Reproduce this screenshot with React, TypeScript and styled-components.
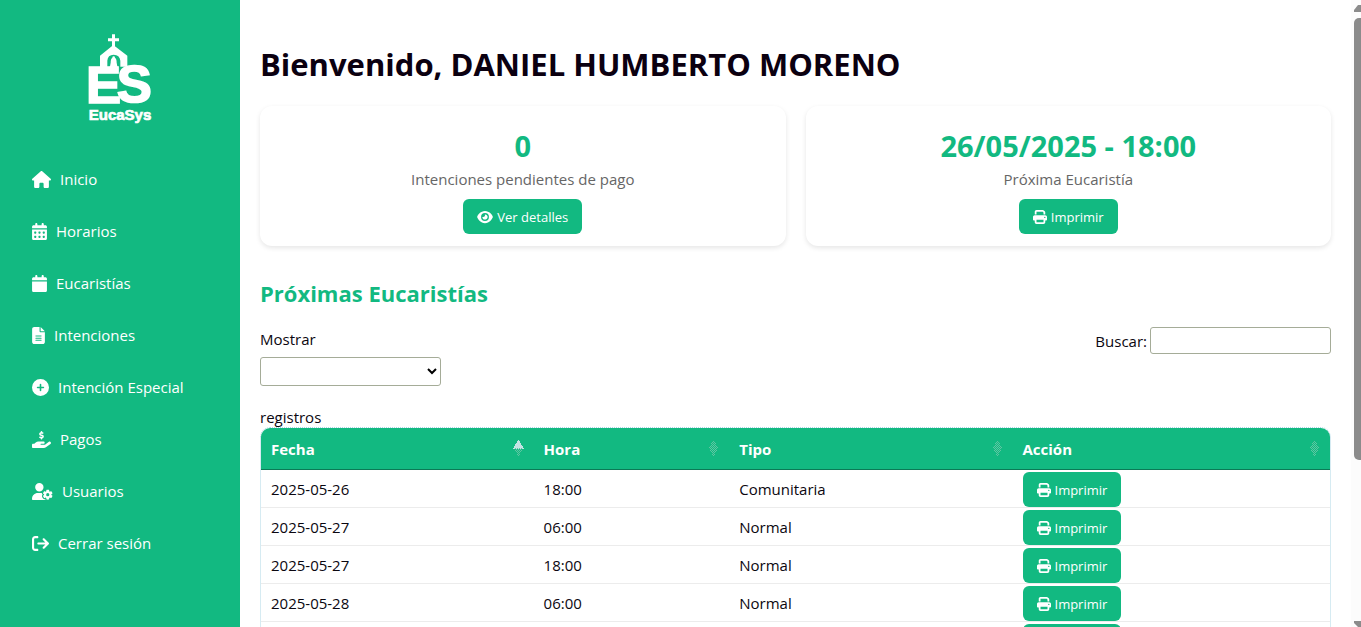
import React from "react";
import styled, { createGlobalStyle, css } from "styled-components";
import {
  FaHouse,
  FaCalendarDays,
  FaCalendar,
  FaFileLines,
  FaCirclePlus,
  FaHandHoldingDollar,
  FaUserGear,
  FaArrowRightFromBracket,
  FaEye,
  FaPrint,
} from "react-icons/fa6";

const green = "#12b981";

const GlobalStyle = createGlobalStyle`
  *, *::before, *::after { box-sizing: border-box; }
  body {
    margin: 0;
    background: #fff;
    color: #0b0710;
    font-family: "Segoe UI", "Open Sans", "Noto Sans", sans-serif;
    font-size: 15px;
    line-height: 24px;
  }
`;

const Shell = styled.div`
  display: flex;
  height: 100vh;
  overflow: hidden;
`;

const Sidebar = styled.aside`
  flex: 0 0 240px;
  background: ${green};
  color: #fff;
  padding: 34px 20px;
`;

const Logo = styled.svg`
  display: block;
  width: 64px;
  height: 92px;
  margin: 0 auto 33px;
  overflow: visible;
`;

const Menu = styled.nav`
  display: flex;
  flex-direction: column;
  gap: 12px;
`;

const MenuLink = styled.a<{ $iconWidth: number }>`
  display: flex;
  align-items: center;
  gap: 9px;
  height: 40px;
  padding: 0 12px;
  color: #fff;
  text-decoration: none;

  svg {
    width: ${(p) => p.$iconWidth}px;
    height: 17px;
  }
`;

const Main = styled.main`
  flex: 1;
  min-width: 0;
  padding: 40px 20px 0;
`;

const Title = styled.h1`
  margin: 0 0 18px;
  font-size: 31px;
  line-height: 48px;
  color: #0b0010;
`;

const Cards = styled.section`
  display: grid;
  grid-template-columns: 1fr 1fr;
  gap: 20px;
  margin-bottom: 29px;
`;

const Card = styled.article`
  display: flex;
  flex-direction: column;
  align-items: center;
  height: 140px;
  padding: 20px 20px 12px;
  border-radius: 12px;
  background: #fff;
  box-shadow: 0 2px 5px rgba(0, 0, 0, 0.1);
`;

const CardValue = styled.strong`
  font-size: 29px;
  line-height: 40px;
  color: ${green};
`;

const CardLabel = styled.p`
  margin: 1px 0 8px;
  color: #666;
`;

const ActionButton = styled.button<{ $iconWidth: number }>`
  display: inline-flex;
  align-items: center;
  gap: 4px;
  height: 35px;
  padding: 0 14px;
  border: 0;
  border-radius: 6px;
  background: ${green};
  color: #fff;
  font: inherit;
  font-size: 13px;
  vertical-align: top;
  cursor: pointer;

  svg {
    width: ${(p) => p.$iconWidth}px;
    height: 14px;
  }
`;

const SectionTitle = styled.h2`
  margin: 0 0 16px;
  font-size: 22px;
  line-height: 36px;
  color: ${green};
`;

const Controls = styled.div`
  display: flex;
  justify-content: space-between;
  align-items: flex-start;
  height: 100px;
`;

const LengthControl = styled.label`
  display: flex;
  flex-direction: column;
  width: 181px;
`;

const fieldStyle = css`
  width: 181px;
  border: 1px solid #a5ac98;
  border-radius: 3px;
  background: #fff;
  font: inherit;
`;

const LengthSelect = styled.select`
  ${fieldStyle}
  height: 29px;
  margin: 6px 0 19px;
`;

const SearchControl = styled.label`
  display: flex;
  align-items: center;
  gap: 3px;
`;

const SearchInput = styled.input`
  ${fieldStyle}
  height: 27px;
`;

const TableFrame = styled.div`
  border: 1px dotted #add8e6;
  border-bottom: 0;
  border-radius: 10px 10px 0 0;
  overflow: hidden;
`;

const Table = styled.table`
  width: 100%;
  table-layout: fixed;
  border-collapse: separate;
  border-spacing: 0;
`;

const HeadCell = styled.th<{ $width: string }>`
  width: ${(p) => p.$width};
  height: 42px;
  padding: 0 10px;
  background: ${green};
  border-bottom: 1px solid #0b7a56;
  color: #fff;
  text-align: left;
`;

const HeadContent = styled.span`
  display: flex;
  align-items: center;
  justify-content: space-between;
`;

const SortIcon = styled.svg`
  width: 11px;
  height: 17px;
`;

const Cell = styled.td`
  height: 38px;
  padding: 0 10px;
  border-bottom: 1px solid #ececec;
`;

const ActionCell = styled(Cell)`
  padding-top: 2px;
`;

const ScrollTrack = styled.div`
  flex: 0 0 10px;
  display: flex;
  flex-direction: column;
  align-items: flex-end;
  padding-top: 5px;
  background: #fcfcfc;
  overflow: hidden;
`;

const ScrollArrow = styled.svg`
  flex: none;
  width: 7px;
  height: 7px;
`;

const ScrollThumb = styled.div`
  flex: 0 0 71%;
  width: 7px;
  margin: 6px 0 auto;
  border-radius: 5px 0 0 5px;
  background: #8b8b8b;
`;

const menu = [
  { label: "Inicio", Icon: FaHouse, iconWidth: 19 },
  { label: "Horarios", Icon: FaCalendarDays, iconWidth: 15 },
  { label: "Eucaristías", Icon: FaCalendar, iconWidth: 15 },
  { label: "Intenciones", Icon: FaFileLines, iconWidth: 13 },
  { label: "Intención Especial", Icon: FaCirclePlus, iconWidth: 17 },
  { label: "Pagos", Icon: FaHandHoldingDollar, iconWidth: 19 },
  { label: "Usuarios", Icon: FaUserGear, iconWidth: 21 },
  { label: "Cerrar sesión", Icon: FaArrowRightFromBracket, iconWidth: 17 },
];

const columns = [
  { label: "Fecha", width: "25.5%" },
  { label: "Hora", width: "18.3%" },
  { label: "Tipo", width: "26.5%" },
  { label: "Acción", width: "29.7%" },
];

const rows = [
  ["2025-05-26", "18:00", "Comunitaria"],
  ["2025-05-27", "06:00", "Normal"],
  ["2025-05-27", "18:00", "Normal"],
  ["2025-05-28", "06:00", "Normal"],
  ["2025-05-28", "18:00", "Normal"],
];

function BrandLogo() {
  return (
    <Logo viewBox="54 42 192 276" role="img" aria-label="EucaSys">
      <g fill="#fff">
        <path d="M126 43h9v12h12v9h-12v16h-9V64h-12v-9h12z" />
        <path
          fillRule="evenodd"
          d="M130 75 172 107V140H151V122Q149 104 131 104Q113 104 112 122V145H90V107Z"
        />
        <path d="M131 109Q135 109 135 113Q140 116 140 128Q141 139 145 144H117Q121 139 122 128Q122 116 127 113Q127 109 131 109ZM127 146h9q-1 4-4.500 4t-4.500-4z" />
        <g
          fontFamily="Liberation Sans, Arial, sans-serif"
          fontWeight="700"
          stroke="#fff"
          strokeWidth="5"
        >
          <text x="48" y="248" fontSize="158">E</text>
          <text x="140" y="247" fontSize="158">S</text>
        </g>
        <text
          x="150"
          y="300"
          fontSize="45"
          fontWeight="700"
          fontFamily="Liberation Sans, Arial, sans-serif"
          textAnchor="middle"
          stroke="#fff"
          strokeWidth="2"
        >
          EucaSys
        </text>
      </g>
    </Logo>
  );
}

function SortMark({ id, ascending }: { id: string; ascending?: boolean }) {
  return (
    <SortIcon viewBox="0 0 11 17" aria-hidden="true" shapeRendering="crispEdges">
      <defs>
        <pattern id={id} width="2" height="2" patternUnits="userSpaceOnUse">
          <rect width="1" height="1" fill="#5fc6a2" />
          <rect x="1" y="1" width="1" height="1" fill="#5fc6a2" />
        </pattern>
      </defs>
      {ascending ? (
        <path d="M5 0h1l5 9H0z" fill="#c4e3e4" />
      ) : (
        <path d="M5 0h1l4 8H1z" fill={`url(#${id})`} />
      )}
      <path d="M1 8h9l-4 8h-1z" fill={`url(#${id})`} />
    </SortIcon>
  );
}

function PrintButton() {
  return (
    <ActionButton type="button" $iconWidth={14}>
      <FaPrint />
      Imprimir
    </ActionButton>
  );
}

export default function App() {
  return (
    <>
      <GlobalStyle />
      <Shell>
        <Sidebar>
          <BrandLogo />
          <Menu>
            {menu.map(({ label, Icon, iconWidth }) => (
              <MenuLink href="#" key={label} $iconWidth={iconWidth}>
                <Icon />
                {label}
              </MenuLink>
            ))}
          </Menu>
        </Sidebar>
        <Main>
          <Title>Bienvenido, DANIEL HUMBERTO MORENO</Title>
          <Cards>
            <Card>
              <CardValue>0</CardValue>
              <CardLabel>Intenciones pendientes de pago</CardLabel>
              <ActionButton type="button" $iconWidth={16}>
                <FaEye />
                Ver detalles
              </ActionButton>
            </Card>
            <Card>
              <CardValue>26/05/2025 - 18:00</CardValue>
              <CardLabel>Próxima Eucaristía</CardLabel>
              <PrintButton />
            </Card>
          </Cards>
          <SectionTitle>Próximas Eucaristías</SectionTitle>
          <Controls>
            <LengthControl>
              Mostrar
              <LengthSelect defaultValue="">
                <option value=""></option>
              </LengthSelect>
              registros
            </LengthControl>
            <SearchControl>
              Buscar:
              <SearchInput type="search" />
            </SearchControl>
          </Controls>
          <TableFrame>
            <Table>
              <thead>
                <tr>
                  {columns.map((c, i) => (
                    <HeadCell key={c.label} $width={c.width} scope="col">
                      <HeadContent>
                        {c.label}
                        <SortMark id={`sort-${i}`} ascending={i === 0} />
                      </HeadContent>
                    </HeadCell>
                  ))}
                </tr>
              </thead>
              <tbody>
                {rows.map((r) => (
                  <tr key={r[0] + r[1]}>
                    {r.map((value) => (
                      <Cell key={value}>{value}</Cell>
                    ))}
                    <ActionCell>
                      <PrintButton />
                    </ActionCell>
                  </tr>
                ))}
              </tbody>
            </Table>
          </TableFrame>
        </Main>
        <ScrollTrack aria-hidden="true">
          <ScrollArrow viewBox="0 0 7 7">
            <path d="M0 7V5L4 0h3v7z" fill="#8b8b8b" />
          </ScrollArrow>
          <ScrollThumb />
          <ScrollArrow viewBox="0 0 7 7">
            <path d="M0 1h7v6H4L0 3z" fill="#8b8b8b" />
          </ScrollArrow>
        </ScrollTrack>
      </Shell>
    </>
  );
}
